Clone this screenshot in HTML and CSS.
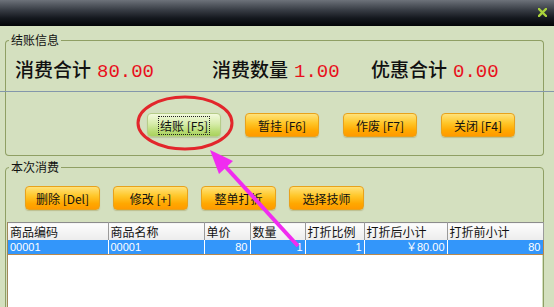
FILE: index.html
```html
<!DOCTYPE html>
<html lang="zh-CN">
  <head>
    <meta charset="UTF-8" />
    <title>结账</title>
    <link rel="stylesheet" href="styles.css">
  </head>
  <body>
    <div class="window">
      <div class="titlebar">
        <svg class="close" width="9" height="9" viewBox="0 0 9 9">
          <path d="M1 1 L8 8 M8 1 L1 8" stroke="#a9d23c" stroke-width="2.4" stroke-linecap="square" />
        </svg>
      </div>

      <!-- 结账信息 -->
      <fieldset class="group summary">
        <legend>结账信息</legend>
        <div class="stats">
          <div class="stat">消费合计<span class="num">80.00</span></div>
          <div class="stat">消费数量<span class="num">1.00</span></div>
          <div class="stat">优惠合计<span class="num">0.00</span></div>
        </div>
      </fieldset>
      <div class="divider"></div>

      <div class="actions">
        <button class="btn btn-green"><span class="focus">结账 [F5]</span></button>
        <button class="btn">暂挂 [F6]</button>
        <button class="btn">作废 [F7]</button>
        <button class="btn">关闭 [F4]</button>
      </div>

      <!-- 本次消费 -->
      <fieldset class="group items">
        <legend>本次消费</legend>
        <div class="toolbar">
          <button class="btn">删除 [Del]</button>
          <button class="btn">修改 [+]</button>
          <button class="btn">整单打折</button>
          <button class="btn">选择技师</button>
        </div>
        <div class="grid">
          <table>
            <colgroup>
              <col style="width:100px" />
              <col style="width:96px" />
              <col style="width:46px" />
              <col style="width:55px" />
              <col style="width:59px" />
              <col style="width:83px" />
              <col style="width:96px" />
            </colgroup>
            <thead>
              <tr>
                <th>商品编码</th>
                <th>商品名称</th>
                <th>单价</th>
                <th>数量</th>
                <th>打折比例</th>
                <th>打折后小计</th>
                <th>打折前小计</th>
              </tr>
            </thead>
            <tbody>
              <tr class="selected">
                <td>00001</td>
                <td>00001</td>
                <td class="r">80</td>
                <td class="r">1</td>
                <td class="r">1</td>
                <td class="r">￥80.00</td>
                <td class="r">80</td>
              </tr>
            </tbody>
          </table>
        </div>
      </fieldset>

      <!-- 标注 -->
      <svg class="annot" width="554" height="307" viewBox="0 0 554 307">
        <ellipse cx="185" cy="123" rx="47" ry="26" fill="none" stroke="#e2262b" stroke-width="3" />
        <line x1="298" y1="246" x2="223" y2="164" stroke="#f02cf0" stroke-width="4" />
        <polygon points="210,150 233,161 219,174" fill="#f02cf0" />
      </svg>
    </div>
  </body>
</html>
```

FILE: styles.css
```css
body {
  margin: 0;
  background-color: #d4e0bf;
  font-family: "Noto Sans CJK SC", sans-serif;
  overflow: hidden;
}
.window {
  position: relative;
  width: 554px;
  height: 307px;
  overflow: hidden;
}
.titlebar {
  height: 26px;
  display: flex;
  justify-content: flex-end;
  align-items: center;
  padding-right: 7px;
  background: linear-gradient(#6d727a 0%, #3c4149 35%, #14181e 70%, #030507 100%);
}
.close {
  margin-top: -2px;
}
.group {
  margin: 0 10px 0 5px;
  padding: 0;
  border: 1px solid #8f9f64;
  border-radius: 4px;
  min-width: 0;
}
.group legend {
  margin-left: 3px;
  padding: 0 2px;
  font-size: 12px;
  line-height: 14px;
  color: #111;
}
.summary {
  margin-top: 7px;
  border-bottom: none;
  border-radius: 4px 4px 0 0;
  padding: 11px 0 8px 0;
}
.stats {
  display: grid;
  grid-template-columns: 197px 159px auto;
  padding-left: 9px;
  font-size: 19px;
  font-weight: 500;
  line-height: 22px;
  color: #111;
}
.num {
  margin-left: 6px;
  font-family: "Liberation Mono", monospace;
  font-weight: normal;
  color: #e8101c;
}
.divider {
  height: 1px;
  background-color: #8497ab;
}
.actions {
  margin: 0 10px 0 5px;
  height: 64px;
  padding: 21px 0 0 141px;
  box-sizing: border-box;
  border: 1px solid #8f9f64;
  border-top: none;
  border-radius: 0 0 4px 4px;
  display: flex;
  gap: 24px;
  align-items: flex-start;
}
.btn {
  width: 74px;
  height: 24px;
  padding: 0;
  font-family: "Noto Sans CJK SC", sans-serif;
  font-size: 12px;
  color: #111;
  border: 1px solid #e8a21c;
  border-radius: 4px;
  background: linear-gradient(#ffe27a 0%, #ffc72a 40%, #ffa800 75%, #ff9a00 100%);
  box-shadow: 0 1px 1px rgba(120, 90, 0, 0.25);
}
.btn-green {
  border-color: #b6cc8a;
  background: linear-gradient(#f2f9dc 0%, #d6ecaa 45%, #b7db72 80%, #a9d25e 100%);
  box-shadow: 0 1px 1px rgba(80, 110, 40, 0.2);
}
.focus {
  outline: 1px dotted #222;
  padding: 0 1px;
}
.items {
  margin-top: 4px;
  height: 200px;
}
.toolbar {
  display: flex;
  gap: 13px;
  padding: 12px 0 0 19px;
}
.toolbar .btn {
  width: 75px;
}
.grid {
  margin: 12px 1px 0 1px;
  height: 120px;
  background-color: #fff;
  border-left: 1px solid #a0885a;
}
table {
  width: 535px;
  border-collapse: collapse;
  table-layout: fixed;
}
th {
  height: 17px;
  padding: 0 2px;
  text-align: left;
  font-weight: normal;
  font-size: 12px;
  line-height: 17px;
  color: #111;
  background: linear-gradient(#fdfdfd, #ececec);
  border-top: 1px solid #8c8c8c;
  border-right: 1px solid #9a9a9a;
}
td {
  height: 14px;
  padding: 0 2px;
  font-family: "Liberation Sans", sans-serif;
  font-size: 11px;
  line-height: 14px;
  color: #fff;
  background-color: #3396fa;
  border-right: 1px solid #fff;
  border-bottom: 1px solid #b8894e;
  white-space: nowrap;
}
td:last-child {
  border-right: 1px solid #b8894e;
}
td.r {
  text-align: right;
}
.annot {
  position: absolute;
  left: 0;
  top: 0;
  pointer-events: none;
}
```
